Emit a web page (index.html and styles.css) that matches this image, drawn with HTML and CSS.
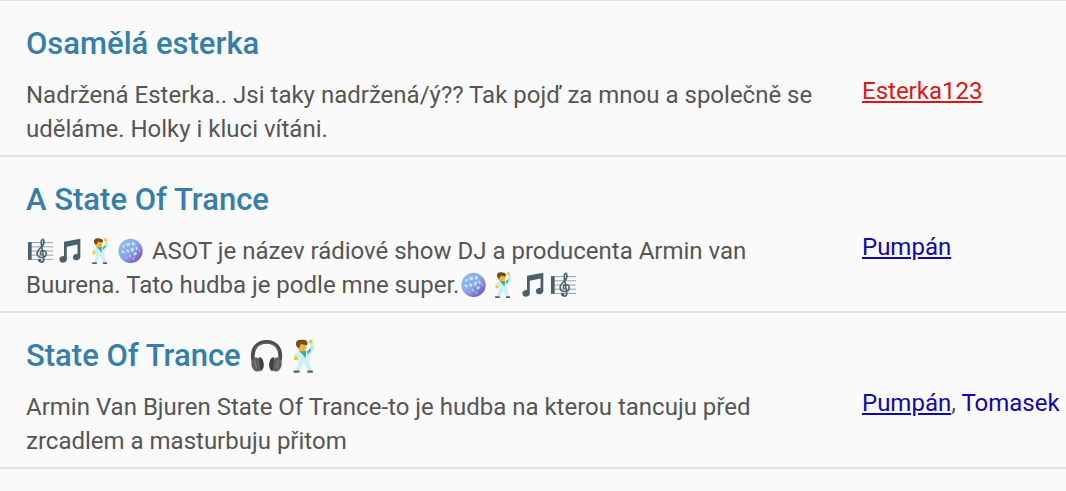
FILE: index.html
```html
<!DOCTYPE html>
<html lang="cs">
<head>
<meta charset="utf-8">
<meta name="viewport" content="width=device-width, initial-scale=1">
<title>Místnosti</title>
<link rel="stylesheet" href="styles.css">
</head>
<body>
<svg class="sprite" aria-hidden="true">
  <defs>
    <linearGradient id="ball" x1="0" y1="0" x2="1" y2="1">
      <stop offset="0" stop-color="#8fc4ee"/>
      <stop offset=".5" stop-color="#8aa6e6"/>
      <stop offset="1" stop-color="#7040ab"/>
    </linearGradient>
    <symbol id="score" viewBox="0 0 30 30">
      <path d="M4 6H28M4 10.500H28M4 15H28M4 19.500H28M4 24H28" stroke="#8d9a9f" stroke-width="1" fill="none"/>
      <path d="M1 5.500H5V24.500H1Z" fill="#47626d"/>
      <path d="M13 24.500c0 3 5 3.500 5-.5L15.300 7c-.4-3 1-4.500 2-4.500 2 3 .5 6-2 8.200-3 2.600-4.500 4.500-4.500 7 0 3 2.500 4.500 5.500 4.300 3-.2 4.500-2 4.300-4.200-.2-2.300-2-3.600-4-3.300-2.200.3-3 2.500-1.500 4.500" stroke="#47626d" stroke-width="1.700" fill="none" stroke-linecap="round"/>
      <circle cx="13.500" cy="25" r="1.700" fill="#47626d"/>
    </symbol>
    <symbol id="notes" viewBox="0 0 30 30">
      <path d="M7.500 5 25 2V21H22V8L10.500 10.500V24H7.500Z" fill="#47626d"/>
      <ellipse cx="6.500" cy="24" rx="4" ry="3.400" transform="rotate(-15 6.500 24)" fill="#47626d"/>
      <ellipse cx="21" cy="21.500" rx="4" ry="3.400" transform="rotate(-15 21 21.500)" fill="#47626d"/>
    </symbol>
    <symbol id="dancer" viewBox="0 0 30 30">
      <path d="M17 12 20 8.500 19 4 21.500 3.500 22.500 9 18 16Z" fill="#c2eaee"/>
      <path d="M18.500 4.500 18 1.500 19 2 20.500 1 21.500 4Z" fill="#fcc21b"/>
      <path d="M9 11.500 16 10.500 19 13 18.500 20 21 28H17.500L14 20.500 10.500 28H7L9.500 20 9 16 7 17 5.500 14.500Z" fill="#cdf0f3"/>
      <path d="M10 11 16 10.500 15.500 17 13 13.500Z" fill="#35aa9d"/>
      <path d="M17 11 20 8 19.500 11 17 14Z" fill="#35aa9d"/>
      <circle cx="7.500" cy="17" r="1.700" fill="#fcc21b"/>
      <ellipse cx="12.500" cy="7" rx="3.800" ry="4.200" fill="#f5b62a"/>
      <path d="M8 7C6 2 10 1 13.500 1.500c3.500.2 4.500 2.500 3 4.500L11.500 5 10 8.500Z" fill="#704b26"/>
      <path d="M5.500 27H10.500V29H5.500ZM17 27H21.500V29H17Z" fill="#54636b"/>
    </symbol>
    <symbol id="disco" viewBox="0 0 30 30">
      <circle cx="14.500" cy="15" r="13" fill="url(#ball)"/>
      <path d="M10 7 14 6V9L10 10ZM16 5 19 6V9H16ZM5 14 8 15V18L5 17ZM10 13 13 14V17L10 16ZM15 12 18 11V15L15 16ZM18 17 21 16V19L18 20ZM6 9 8 8V11L6 12ZM20 10 22 11V14H20ZM13 19 15 20V22L13 21Z" fill="#c9f1fb" opacity=".85"/>
      <path d="M9 20 12 21V24L9 23ZM23 12 25 13V16H23ZM16 22 19 21V24L16 25Z" fill="#b6a0e6" opacity=".7"/>
    </symbol>
    <symbol id="phones" viewBox="0 0 38 38">
      <path d="M4.500 24C2 11 9 4 18.500 4S35 11 32.500 24" stroke="#4b4b4b" stroke-width="4" fill="none"/>
      <path d="M6 13C9 6 14 5 18.500 5S28 6 31 13" stroke="#666" stroke-width="1.200" fill="none"/>
      <ellipse cx="8" cy="28" rx="5.500" ry="7.500" transform="rotate(-12 8 28)" fill="#606060"/>
      <ellipse cx="29" cy="28" rx="5.500" ry="7.500" transform="rotate(12 29 28)" fill="#606060"/>
      <path d="M10.500 20.500C16 19 18 34 12 35ZM26.500 20.500C21 19 19 34 25 35Z" fill="#404040"/>
      <path d="M6 24 8 32M31 24 29 32" stroke="#7b7b7b" stroke-width="1.500" fill="none"/>
    </symbol>
  </defs>
</svg>
<main class="rooms">
  <article class="room">
    <div class="info">
      <h2 class="title">Osamělá esterka</h2>
      <p class="text">Nadržená Esterka.. Jsi taky nadržená/ý?? Tak pojď za mnou a společně se uděláme. Holky i kluci vítáni.</p>
    </div>
    <div class="users"><a class="user female" href="#esterka123">Esterka123</a></div>
  </article>
  <article class="room">
    <div class="info">
      <h2 class="title">A State Of Trance</h2>
      <p class="text"><svg class="emoji"><use href="#score"/></svg><svg class="emoji"><use href="#notes"/></svg><svg class="emoji"><use href="#dancer"/></svg><svg class="emoji"><use href="#disco"/></svg> ASOT je název rádiové show DJ a producenta Armin van Buurena. Tato hudba je podle mne super.<svg class="emoji"><use href="#disco"/></svg><svg class="emoji"><use href="#dancer"/></svg><svg class="emoji"><use href="#notes"/></svg><svg class="emoji"><use href="#score"/></svg></p>
    </div>
    <div class="users"><a class="user" href="#pumpan">Pumpán</a></div>
  </article>
  <article class="room">
    <div class="info">
      <h2 class="title">State Of Trance <svg class="emoji big"><use href="#phones"/></svg><svg class="emoji big"><use href="#dancer"/></svg></h2>
      <p class="text">Armin Van Bjuren State Of Trance-to je hudba na kterou tancuju před zrcadlem a masturbuju přitom</p>
    </div>
    <div class="users"><a class="user" href="#pumpan">Pumpán</a>, <a class="user plain" href="#tomasek">Tomasek</a></div>
  </article>
</main>
</body>
</html>
```
FILE: styles.css
```css
body {
  margin: 0;
  background: #fafafa;
  color: #555;
  font-family: Roboto, sans-serif;
  font-size: 24px;
  line-height: 34px;
}

.sprite {
  position: absolute;
  width: 0;
  height: 0;
}

.rooms {
  border-top: 1px solid #e0e0e0;
}

.room {
  display: grid;
  grid-template-columns: 1fr 204px;
  align-items: center;
  column-gap: 26px;
  padding: 23px 0 9px 26px;
  border-bottom: 2px solid #e0e0e0;
}

.title {
  margin: 0 0 14px;
  color: #367fa9;
  font-size: 31px;
  font-weight: 500;
  line-height: 40px;
}

.text {
  margin: 0;
}

.users {
  padding-top: 12px;
  white-space: nowrap;
}

.user {
  color: #1107b0;
}

.female {
  color: #dd1515;
}

.plain {
  text-decoration: none;
}

.emoji {
  width: 30px;
  height: 28px;
  vertical-align: -6px;
}

.big {
  width: 38px;
  height: 36px;
  vertical-align: -8px;
}
```
